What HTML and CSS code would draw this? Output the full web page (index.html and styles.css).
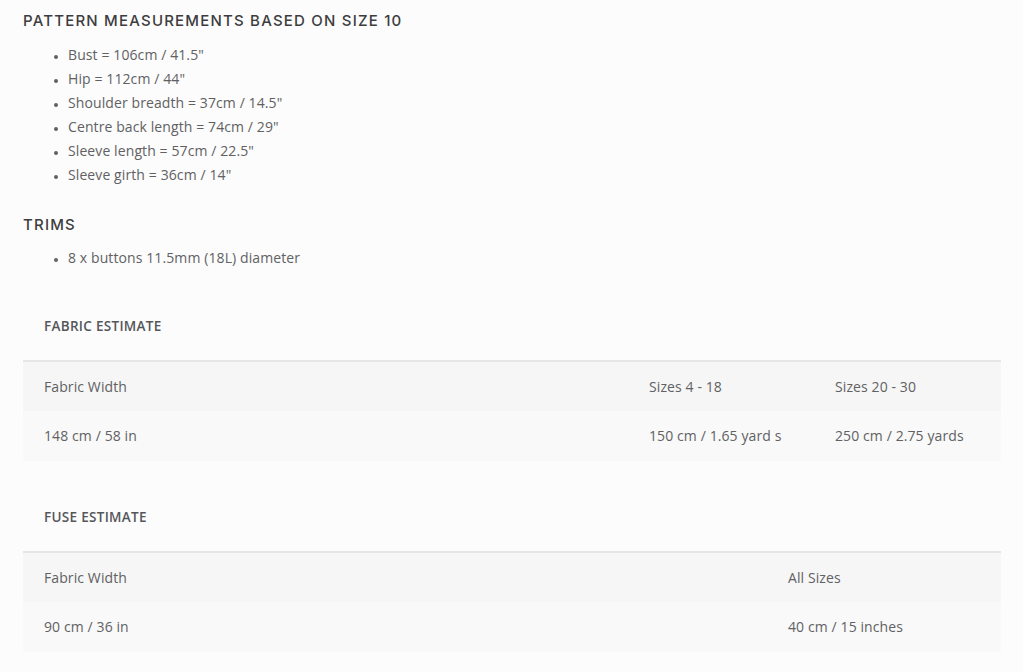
FILE: index.html
```html
<!DOCTYPE html>
<html lang="en">
<head>
<meta charset="utf-8">
<title>Pattern measurements</title>
<link rel="stylesheet" href="styles.css">
</head>
<body>
<main class="page">
  <h3 class="section-title">PATTERN MEASUREMENTS BASED ON SIZE 10</h3>
  <ul class="bullets">
    <li>Bust = 106cm / 41.5"</li>
    <li>Hip = 112cm / 44"</li>
    <li>Shoulder breadth = 37cm / 14.5"</li>
    <li>Centre back length = 74cm / 29"</li>
    <li>Sleeve length = 57cm / 22.5"</li>
    <li>Sleeve girth = 36cm / 14"</li>
  </ul>

  <h3 class="section-title trims">TRIMS</h3>
  <ul class="bullets bullets-trims">
    <li>8 x buttons 11.5mm (18L) diameter</li>
  </ul>

  <table class="estimate">
    <colgroup><col class="c-fab1"><col class="c-fab2"><col class="c-fab3"></colgroup>
    <thead>
      <tr><th colspan="3">FABRIC ESTIMATE</th></tr>
    </thead>
    <tbody>
      <tr class="row-a"><td>Fabric Width</td><td>Sizes 4 - 18</td><td>Sizes 20 - 30</td></tr>
      <tr class="row-b"><td>148 cm / 58 in</td><td>150 cm / 1.65 yard s</td><td>250 cm / 2.75 yards</td></tr>
    </tbody>
  </table>

  <table class="estimate">
    <colgroup><col class="c-fuse1"><col class="c-fuse2"></colgroup>
    <thead>
      <tr><th colspan="2">FUSE ESTIMATE</th></tr>
    </thead>
    <tbody>
      <tr class="row-a"><td>Fabric Width</td><td>All Sizes</td></tr>
      <tr class="row-b"><td>90 cm / 36 in</td><td>40 cm / 15 inches</td></tr>
    </tbody>
  </table>
</main>
</body>
</html>
```

FILE: styles.css
```css
html, body {
  margin: 0;
  padding: 0;
  background: #fcfcfc;
}

.page {
  padding: 12px 22px 0 23px;
  font-family: "Open Sans", "Liberation Sans", sans-serif;
  color: #666;
}

.section-title {
  margin: 0;
  font-family: Inter, "Open Sans", "Liberation Sans", sans-serif;
  font-weight: 500;
  font-size: 15px;
  line-height: 18px;
  letter-spacing: 1.2px;
  color: #3d3d3f;
}

.section-title.trims {
  margin-top: 29px;
}

.bullets {
  margin: 13px 0 0;
  padding: 0 0 0 45px;
  font-size: 14px;
  line-height: 24px;
  letter-spacing: 0.1px;
  color: #616163;
}

.bullets-trims {
  margin-top: 12px;
}

.bullets li::marker {
  font-size: 10px;
}

.estimate {
  width: 978px;
  margin-top: 31px;
  border-collapse: collapse;
  table-layout: fixed;
  font-size: 14px;
  letter-spacing: 0.1px;
  color: #616163;
}

.c-fab1 { width: 605px; }
.c-fab2 { width: 186px; }
.c-fab3 { width: 187px; }
.c-fuse1 { width: 744px; }
.c-fuse2 { width: 234px; }

.estimate th {
  text-align: left;
  padding: 16px 21px 25px;
  line-height: 18px;
  font-size: 13.5px;
  font-weight: 600;
  letter-spacing: 0.3px;
  color: #55565a;
  border-bottom: 2px solid #e6e6e6;
}

.estimate td {
  height: 50px;
  padding: 0 21px;
  line-height: 18px;
  vertical-align: middle;
  box-sizing: border-box;
}

.row-a td { background: #f6f6f6; }
.row-b td { background: #f9f9f9; }
```
